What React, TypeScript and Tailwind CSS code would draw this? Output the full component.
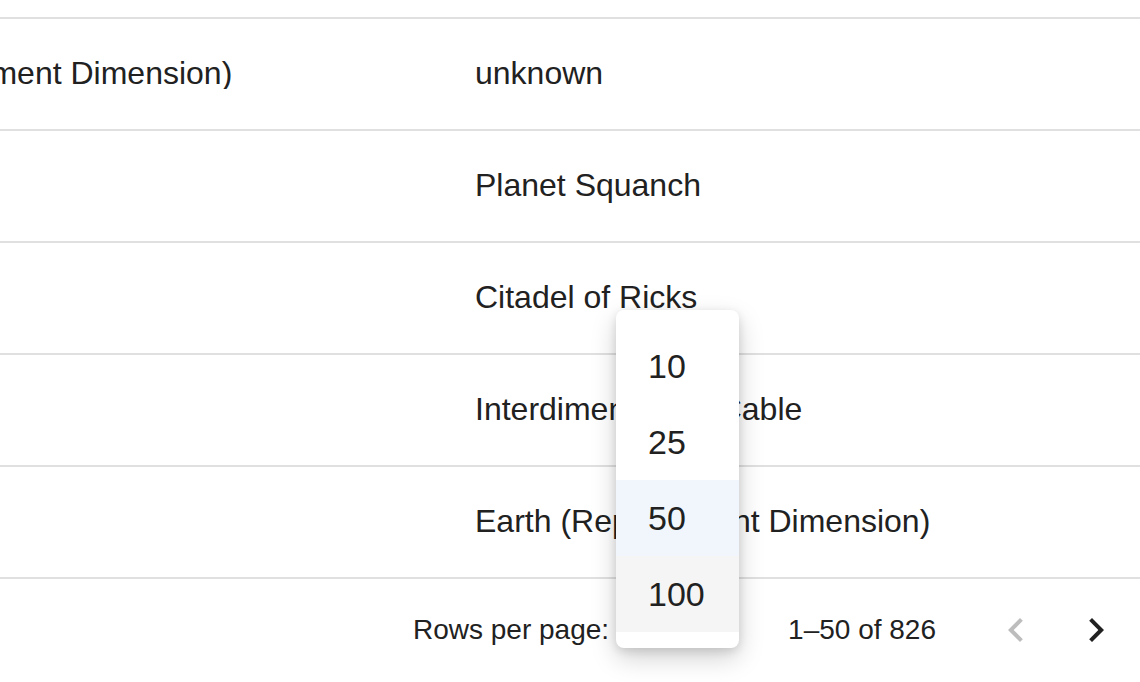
import React from "react";

const rows = [
  { origin: "Earth (Replacement Dimension)", location: "unknown" },
  { origin: "", location: "Planet Squanch" },
  { origin: "", location: "Citadel of Ricks" },
  { origin: "", location: "Interdimensional Cable" },
  { origin: "", location: "Earth (Replacement Dimension)" },
];

const options = [
  { label: "10", bg: "" },
  { label: "25", bg: "" },
  { label: "50", bg: "bg-[#f0f6fc]" },
  { label: "100", bg: "bg-[#f5f5f5]" },
];

function Chevron({ dir, className }: { dir: "left" | "right"; className: string }) {
  return (
    <svg viewBox="0 0 24 24" className={className} fill="currentColor">
      {dir === "left" ? (
        <path d="M15.41 16.59 10.83 12l4.58-4.59L14 6l-6 6 6 6z" />
      ) : (
        <path d="M8.59 16.59 13.17 12 8.59 7.41 10 6l6 6-6 6z" />
      )}
    </svg>
  );
}

export default function App() {
  return (
    <div
      className="relative w-[1140px] h-[682px] overflow-hidden bg-white text-[#212121]"
      style={{ fontFamily: '"Liberation Sans", Arial, sans-serif' }}
    >
      {/* table body, scrolled horizontally */}
      <div className="h-[19px] border-b-2 border-[#e0e0e0]" />
      {rows.map((row, i) => (
        <div
          key={i}
          className="flex items-center h-[112px] pb-[2px] border-b-2 border-[#e0e0e0] text-[32px] leading-none"
        >
          <div className="w-[475px] shrink-0 overflow-hidden">
            <span className="block whitespace-nowrap ml-[-223px]">{row.origin}</span>
          </div>
          <div className="whitespace-nowrap">{row.location}</div>
        </div>
      ))}

      {/* pagination */}
      <div className="flex items-center justify-end h-[101px] pr-[20px] text-[28px]">
        <span className="whitespace-nowrap">Rows per page:</span>
        <div className="w-[179px] shrink-0" />
        <span className="whitespace-nowrap">1–50 of 826</span>
        <Chevron dir="left" className="w-[48px] h-[48px] ml-[56px] text-[#bdbdbd]" />
        <Chevron dir="right" className="w-[48px] h-[48px] ml-[32px] text-[#212121]" />
      </div>

      {/* rows-per-page menu */}
      <div className="absolute left-[616px] top-[310px] w-[123px] pt-[18px] pb-[16px] bg-white rounded-[8px] shadow-[0_10px_26px_rgba(0,0,0,0.18),0_3px_10px_rgba(0,0,0,0.12)]">
        {options.map((o) => (
          <div
            key={o.label}
            className={`flex items-center h-[76px] pl-[32px] text-[34px] ${o.bg}`}
          >
            {o.label}
          </div>
        ))}
      </div>
    </div>
  );
}
